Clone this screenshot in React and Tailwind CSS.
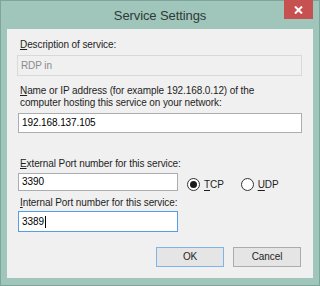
import React from "react";

function Radio({ checked, label, accel, rest }) {
  return (
    <div className="flex items-center">
      <div className="w-[13px] h-[13px] rounded-full border border-[#333333] bg-white flex items-center justify-center">
        {checked && <div className="w-[7px] h-[7px] rounded-full bg-[#1a1a1a]" />}
      </div>
      <span className="ml-[4px] text-[10px] leading-[12px] text-[#1e1e1e]">
        <span className="underline underline-offset-[2px]">{accel}</span>
        {rest}
      </span>
    </div>
  );
}

export default function App() {
  return (
    <div
      className="relative w-[320px] h-[286px] border border-[#7fa49a] bg-[#a0c5bb] flex flex-col"
      style={{ fontFamily: '"Liberation Sans", Arial, sans-serif' }}
    >
      <div className="h-[28px] flex items-center justify-center">
        <span className="text-[13px] text-[#2f3a38] tracking-[-0.1px] mt-[1px]">Service Settings</span>
      </div>
      <div className="absolute top-[-1px] left-[283px] w-[29px] h-[19px] bg-[#c75050] flex items-center justify-center">
        <svg width="9" height="8" viewBox="0 0 9 8">
          <path d="M1 0.5 L8 7.5 M8 0.5 L1 7.5" stroke="white" strokeWidth="2" />
        </svg>
      </div>
      <div className="ml-[6px] w-[306px] h-[249px] bg-[#f0f0f0] flex flex-col text-[10px] leading-[12px] text-[#1e1e1e] tracking-[-0.1px]">
        <div className="mt-[10px] pl-[13px]">
          <span className="underline underline-offset-[1px]">D</span>escription of service:
        </div>
        <div className="mt-[4px] ml-[10px] w-[285px] h-[21px] border border-[#d9d9d9] bg-[#f0f0f0] flex items-center pl-[3px] text-[#8a8a8a]">
          RDP in
        </div>
        <div className="mt-[9px] pl-[13px]">
          <div>
            <span className="underline underline-offset-[1px]">N</span>ame or IP address (for example 192.168.0.12) of the
          </div>
          <div>computer hosting this service on your network:</div>
        </div>
        <div className="mt-[4px] ml-[11px] w-[284px] h-[20px] border border-[#abadb3] bg-white flex items-center pl-[3px] text-black">
          192.168.137.105
        </div>
        <div className="mt-[25px] pl-[13px]">
          <span className="underline underline-offset-[1px]">E</span>xternal Port number for this service:
        </div>
        <div className="mt-[3px] flex items-start">
          <div className="ml-[11px] w-[160px] h-[18px] border border-[#abadb3] bg-white flex items-center pl-[3px] text-black">
            3390
          </div>
          <div className="ml-[9px] mt-[5px] flex items-center">
            <Radio checked accel="T" rest="CP" />
            <div className="ml-[17px]">
              <Radio accel="U" rest="DP" />
            </div>
          </div>
        </div>
        <div className="mt-[6px] pl-[13px]">
          <span className="underline underline-offset-[1px]">I</span>nternal Port number for this service:
        </div>
        <div className="mt-[2px] ml-[11px] w-[160px] h-[21px] border border-[#569de5] bg-white flex items-center pl-[3px] text-black">
          3389<span className="inline-block w-[1px] h-[12px] bg-black ml-[1px]" />
        </div>
        <div className="mt-[15px] flex justify-end pr-[12px] gap-[9px]">
          <div className="w-[68px] h-[20px] border border-[#7eb4ea] bg-[#e5e5e5] flex items-center justify-center text-[#1e1e1e]">
            OK
          </div>
          <div className="w-[68px] h-[20px] border border-[#acacac] bg-[#e5e5e5] flex items-center justify-center text-[#1e1e1e]">
            Cancel
          </div>
        </div>
      </div>
    </div>
  );
}
